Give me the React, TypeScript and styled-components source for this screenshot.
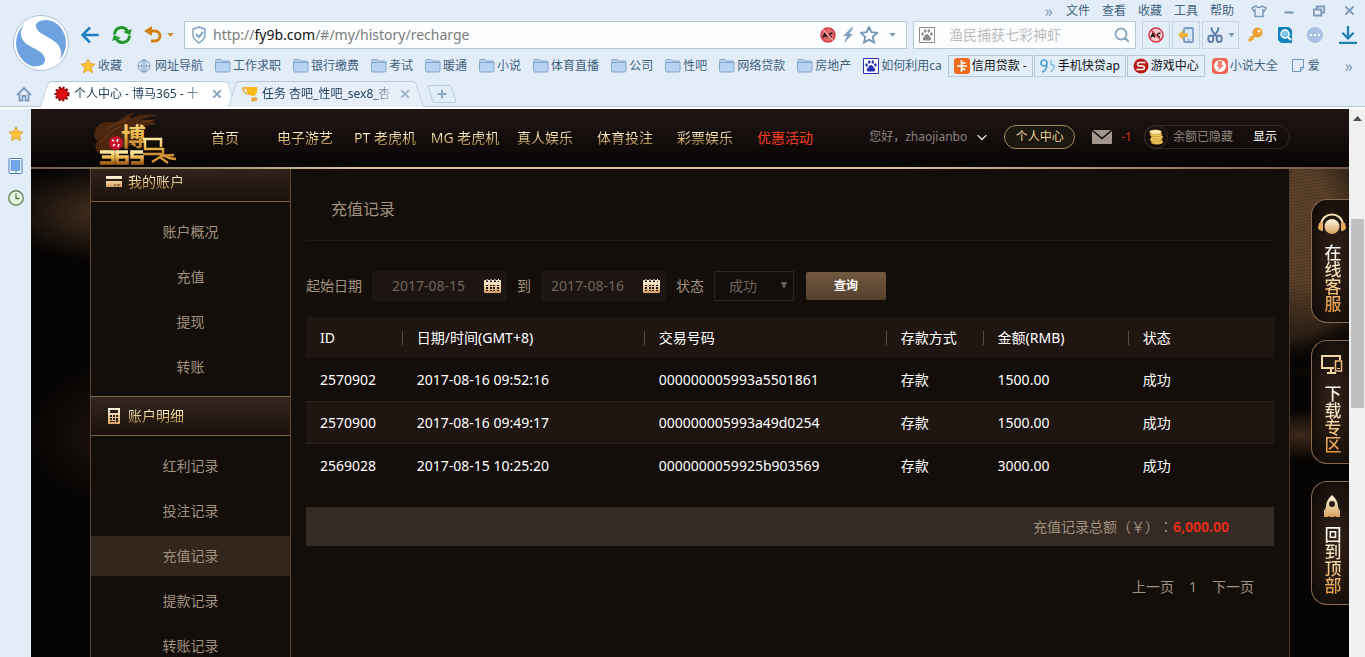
import React, { useState } from "react";
import styled, { createGlobalStyle, css } from "styled-components";

const GlobalStyle = createGlobalStyle`
  * { box-sizing: border-box; }
  body {
    margin: 0;
    background: #e3edf8;
    font-family: "Noto Sans", "Noto Sans CJK SC", sans-serif;
    font-size: 12px;
    line-height: 20px;
    overflow: hidden;
  }
  button, input, select {
    font: inherit;
    color: inherit;
    margin: 0;
    padding: 0;
    border: 0;
    border-radius: 0;
    background: none;
    outline: 0;
  }
  button { cursor: pointer; }
  a { color: inherit; text-decoration: none; }
  ul { list-style: none; margin: 0; padding: 0; }
  svg { display: block; flex: none; }
`;

const goldText = css`
  background: linear-gradient(#fff3cd 25%, #e2c681 55%, #9b7437 90%);
  background-clip: text;
  color: transparent;
`;

/* ---------- Browser frame ---------- */

const Frame = styled.div`
  display: flex;
  flex-direction: column;
  height: 100vh;
  overflow: hidden;
`;

const Chrome = styled.header`
  display: grid;
  grid-template-columns: 80px minmax(0, 1fr);
  color: #41617f;
`;

const LogoCell = styled.div`
  grid-row: span 3;
  padding: 14px 0 0 12px;
`;

const MenuRow = styled.nav`
  display: flex;
  justify-content: flex-end;
  align-items: center;
  gap: 12px;
  height: 21px;
`;

const WindowControls = styled.div`
  display: flex;
  margin: 0 1px 0 -2px;
`;

const WindowButton = styled.button`
  display: grid;
  place-items: center;
  width: 30px;
  height: 18px;
`;

const AddressRow = styled.div`
  display: flex;
  gap: 6px;
  height: 28px;
`;

const NavButtons = styled.div`
  display: flex;
  align-items: center;
  width: 98px;
`;

const NavButton = styled.button<{ $w: number }>`
  display: grid;
  place-items: center start;
  width: ${(p) => p.$w}px;
  height: 28px;
`;

const Field = styled.div`
  display: flex;
  align-items: center;
  background: #fbfdff;
  border: 1px solid #b4cadb;
  padding: 0 6px;
  gap: 6px;
`;

const UrlField = styled(Field)`
  flex: 1;
  min-width: 0;
`;

const SearchField = styled(Field)`
  width: 223px;
  padding: 0 5px;
`;

const UrlLink = styled.a`
  flex: 1;
  min-width: 0;
  overflow: hidden;
  white-space: nowrap;
  font-size: 14px;
  color: #7c7c7c;
  b { font-weight: 400; color: #111; }
`;

const SearchInput = styled.input`
  flex: 1;
  min-width: 0;
  padding-left: 8px;
  font-size: 14px;
  &::placeholder { color: #bcbcbc; opacity: 1; }
`;

const Tools = styled.div`
  display: flex;
  gap: 2px;
`;

const ToolButton = styled.button<{ $boxed?: boolean; $w?: number }>`
  display: flex;
  align-items: center;
  justify-content: center;
  gap: 5px;
  width: ${(p) => p.$w ?? 28}px;
  height: 28px;
  border: 1px solid ${(p) => (p.$boxed ? "#c6d5e4" : "transparent")};
`;

const BookmarkRow = styled.div`
  display: flex;
  align-items: center;
  height: 31px;
  padding: 2px 12px 0 0;
  white-space: nowrap;
`;

const Bookmark = styled.a<{ $boxed?: boolean }>`
  display: flex;
  align-items: center;
  height: 22px;
  margin-right: 12px;
  &:first-child { margin-right: ${(p) => (p.$boxed ? 1 : 15)}px; }
  ${(p) =>
    p.$boxed &&
    css`
      margin-right: 1px;
      padding: 0 5px;
      border: 1px solid #b4c8da;
      color: #111;
    `}
`;

const BookmarkGroup = styled.div`
  display: flex;
  margin: 0 6px 0 -6px;
`;

const IconSlot = styled.span`
  display: flex;
  width: 18px;
`;

const Overflow = styled.button`
  margin-left: auto;
  font-size: 16px;
  color: #7d9bb8;
`;

const MenuOverflow = styled(Overflow)`
  margin: 0 1px 0 0;
`;

const TabRow = styled.div`
  display: flex;
  align-items: flex-end;
  height: 29px;
  border-bottom: 2px solid #fff;
  box-shadow: inset 0 -1px #b4cadb;
  color: #24415f;
`;

const HomeButton = styled.button`
  display: grid;
  place-items: center;
  width: 44px;
  height: 26px;
  padding-left: 4px;
`;

const Tab = styled.div<{ $active?: boolean }>`
  position: relative;
  display: flex;
  align-items: center;
  gap: 4px;
  width: 188px;
  height: 26px;
  padding: 0 10px;
  isolation: isolate;
  &::before, &::after {
    content: "";
    position: absolute;
    z-index: -1;
    top: 0;
    bottom: 0;
    border-top: 1px solid #b4cadb;
    background: ${(p) => (p.$active ? "#fff" : "#e7f0f9")};
  }
  &::before {
    left: 0;
    right: 50%;
    border-left: 1px solid #b4cadb;
    border-top-left-radius: 4px;
    transform: skewX(-18deg);
  }
  &::after {
    left: 45%;
    right: 0;
    border-right: 1px solid #b4cadb;
    border-top-right-radius: 4px;
    transform: skewX(18deg);
  }
`;

const TabTitle = styled.span`
  flex: 1;
  min-width: 0;
  overflow: hidden;
  white-space: nowrap;
  mask-image: linear-gradient(to right, #000 82%, transparent);
`;

const NewTab = styled.button`
  display: grid;
  place-items: center;
  width: 24px;
  height: 18px;
  margin: 0 0 4px 10px;
  border: 1px solid #b9cddf;
  border-radius: 2px;
  transform: skewX(18deg);
  svg { transform: skewX(-18deg); }
`;

const Viewport = styled.div`
  display: flex;
  flex: 1;
  min-height: 0;
`;

const SideStrip = styled.aside`
  display: flex;
  flex-direction: column;
  align-items: center;
  gap: 16px;
  width: 31px;
  padding: 17px 0 0;
`;

const Scrollbar = styled.div`
  display: flex;
  flex-direction: column;
  align-items: center;
  width: 16px;
  padding-top: 7px;
  background: #f0f0f0;
`;

const ScrollThumb = styled.div`
  flex: none;
  width: 13px;
  height: 35%;
  margin-top: 98px;
  background: #bfbfbf;
`;

/* ---------- Site ---------- */

const Site = styled.div`
  position: relative;
  flex: 1;
  min-width: 0;
  overflow: hidden;
  background:
    repeating-linear-gradient(172deg, rgba(0, 0, 0, 0.14) 0 1px, transparent 1px 3px),
    linear-gradient(160deg, transparent 58%, #060403 80%) 100% 160px / 60px 100px no-repeat,
    radial-gradient(ellipse 110px 48px at 76px 104px, #4a3322, transparent),
    radial-gradient(ellipse 90px 70px at 90px 325px, #24170f, transparent),
    radial-gradient(ellipse 90px 150px at calc(100% - 46px) 120px, #5c412a 35%, transparent),
    radial-gradient(ellipse 50px 26px at calc(100% - 48px) 326px, #422b1b, transparent),
    #060403;
`;

const SiteHeader = styled.header`
  position: relative;
  z-index: 1;
  height: 60px;
  background:
    linear-gradient(to right, #6e5a48, #d8c495 25%, #d8c495 65%, #6f5645) bottom / 100% 2px no-repeat,
    linear-gradient(#1f1614, #080404);
`;

const Container = styled.div`
  display: flex;
  max-width: 1200px;
  margin: 0 auto;
`;

const HeaderInner = styled(Container)`
  align-items: center;
  height: 58px;
`;

const SiteLogo = styled.a`
  width: 95px;
  padding-left: 2px;
`;

const MainNav = styled.nav`
  display: flex;
`;

const NavItem = styled.a<{ $hot?: boolean }>`
  width: 80px;
  text-align: center;
  font-size: 14px;
  white-space: nowrap;
  ${(p) => (p.$hot ? "color: #f23c22;" : goldText)}
`;

const UserArea = styled.div`
  display: flex;
  align-items: center;
  margin-left: auto;
  padding-bottom: 3px;
  color: #8f8680;
  white-space: nowrap;
`;

const UserMenu = styled.button`
  display: flex;
  align-items: center;
  gap: 10px;
  margin-right: 17px;
`;

const CenterPill = styled.a`
  width: 71px;
  height: 24px;
  margin-right: 17px;
  border: 1px solid #a58b52;
  border-radius: 12px;
  background: #1c1710;
  text-align: center;
  line-height: 22px;
  color: #ead596;
`;

const MailLink = styled.a`
  display: flex;
  align-items: center;
  gap: 9px;
  margin-right: 12px;
  color: #d02c20;
`;

const Balance = styled.div`
  display: flex;
  align-items: center;
  height: 24px;
  padding-right: 12px;
  border: 1px solid #342b27;
  border-radius: 12px;
  button { margin-left: 20px; color: #fff; }
`;

const CoinBadge = styled.span`
  display: grid;
  place-items: center;
  width: 24px;
  height: 24px;
  margin: 0 5px 0 -1px;
  border: 1px solid #3a2f28;
  border-radius: 50%;
`;

const Content = styled(Container)`
  margin-top: -7px;
`;

const Sidebar = styled.aside`
  width: 201px;
  height: 100vh;
  border: 1px solid #5f4634;
  border-width: 0 1px;
  background: #130e0a;
  font-size: 14px;
`;

const GroupTitle = styled.h2`
  display: flex;
  align-items: center;
  gap: 6px;
  height: 40px;
  margin: 0;
  padding-left: 15px;
  border: 1px solid #7d6248;
  border-width: 1px 0;
  background: linear-gradient(#33261e, #1c120b);
  font-size: 14px;
  font-weight: 400;
`;

const GroupName = styled.span`
  ${goldText}
`;

const GroupIcon = styled.span`
  display: grid;
  justify-items: center;
  min-width: 16px;
`;

const GroupList = styled.ul`
  padding: 10px 0 4px;
`;

const GroupItem = styled.li<{ $active?: boolean }>`
  margin-bottom: 5px;
  text-align: center;
  line-height: 40px;
  color: #a1917f;
  background: ${(p) => (p.$active ? "#33261c" : "none")};
  a { display: block; }
`;

const Main = styled.main`
  flex: 1;
  min-width: 0;
  padding: 7px 15px 0;
  border-right: 1px solid #4b3829;
  background: #130e0a;
  font-size: 14px;
  color: #a1917f;
`;

const PageTitle = styled.h1`
  margin: 0;
  padding: 30px 25px 20px;
  border-bottom: 1px solid #221a16;
  font-size: 16px;
  line-height: 21px;
  font-weight: 400;
`;

const Filters = styled.form`
  display: flex;
  align-items: center;
  gap: 10px;
  height: 30px;
  margin: 30px 0 16px;
`;

const DateBox = styled.span<{ $w: number; $pad: number }>`
  display: flex;
  align-items: center;
  width: ${(p) => p.$w}px;
  height: 30px;
  padding: 0 6px 0 ${(p) => p.$pad}px;
  background: #1d1511;
  input { flex: 1; min-width: 0; color: #6f645b; }
`;

const SelectBox = styled.span`
  position: relative;
  width: 80px;
  height: 30px;
  select {
    appearance: none;
    width: 100%;
    height: 100%;
    padding-left: 14px;
    border: 1px solid #2d2521;
    background: #130e0a;
    color: #6f645b;
  }
  svg { position: absolute; right: 7px; top: 11px; }
`;

const QueryButton = styled.button`
  width: 80px;
  height: 28px;
  margin-left: 2px;
  border-radius: 2px;
  background: linear-gradient(#72583f, #55402c);
  color: #fff;
  font-size: 12px;
  font-weight: 700;
`;

const Records = styled.table`
  width: 100%;
  table-layout: fixed;
  border-collapse: collapse;
  color: #fff;
  th, td {
    padding: 0 14px;
    text-align: left;
    font-weight: 400;
    white-space: nowrap;
  }
  th {
    height: 41px;
    background:
      linear-gradient(#5f4b3a, #5f4b3a) 100% 50% / 1px 14px no-repeat,
      #1f1612;
  }
  th:last-child { background: #1f1612; }
  td { height: 43px; }
  tbody tr:nth-child(even) {
    background: #1f1612;
    box-shadow: inset 0 1px #2b201a, inset 0 -1px #2b201a;
  }
`;

const Column = styled.col<{ $share: number }>`
  width: ${(p) => p.$share}%;
`;

const Total = styled.p`
  margin: 20px 0 0;
  padding-right: 45px;
  background: #352b24;
  text-align: right;
  line-height: 38px;
  b { color: #e02b1a; }
`;

const Currency = styled.span`
  font-family: "Noto Sans CJK TC", sans-serif;
  text-spacing-trim: space-all;
`;

const Pager = styled.nav`
  display: flex;
  justify-content: flex-end;
  gap: 15px;
  padding: 31px 20px 0;
`;

const FloatDock = styled.div`
  position: absolute;
  top: 90px;
  right: 0;
  z-index: 2;
  display: flex;
  flex-direction: column;
  gap: 17px;
`;

const DockLink = styled.a`
  display: flex;
  flex-direction: column;
  align-items: center;
  gap: 8px;
  width: 38px;
  height: 124px;
  padding: 12px 0 0 2px;
  border: 1px solid #8a6a4c;
  border-right: 0;
  border-radius: 16px 0 0 16px;
  background: radial-gradient(ellipse at 60% 50%, #36241a, #120c08 85%);
`;

const DockIcon = styled.span`
  display: grid;
  place-items: center;
  height: 24px;
`;

const DockLabel = styled.span`
  writing-mode: vertical-rl;
  font-size: 17px;
  font-weight: 500;
  line-height: 20px;
  background: linear-gradient(#fff 5%, #f3dcae 50%, #e69b42 95%);
  background-clip: text;
  color: transparent;
`;

/* ---------- Drawings ---------- */

const SogouLogo = () => (
  <svg width="58" height="58" viewBox="0 0 58 58">
    <circle cx="29" cy="29" r="27.5" fill="#fff" stroke="#a9c2da" />
    <circle cx="29" cy="29" r="25" fill="#6ea2e0" />
    <path d="M32 3C17 3 8 11 9 21c1 13 24 13 24 25 0 5-6 7-12 6 4 3 9 4 14 3 10-2 15-9 14-18C47 24 26 22 24 13c-1-4 3-7 10-7 3 0 6 1 8 2-3-3-6-5-10-5z" fill="#fff" />
  </svg>
);

const Stroke = ({ d, color = "#7d9bb8", size = 16, w = 2 }: { d: string; color?: string; size?: number; w?: number }) => (
  <svg width={size} height={size} viewBox="0 0 16 16" fill="none" stroke={color} strokeWidth={w}>
    <path d={d} />
  </svg>
);

const Caret = ({ color = "#7d9bb8" }: { color?: string }) => (
  <svg width="7" height="4" viewBox="0 0 8 5"><path d="M0 0h8L4 5z" fill={color} /></svg>
);

const BackIcon = () => <Stroke size={20} color="#1f7fc4" w={2} d="M8 2L2 8l6 6M2.500 8H15" />;

const RefreshIcon = () => (
  <svg width="22" height="20" viewBox="0 0 22 20">
    <path d="M3.500 9.500C4 2 13 0 16.500 6M18.500 10.500C18 18 9 20 5.500 14" fill="none" stroke="#23992b" strokeWidth="3" />
    <path d="M21 4l-2 6-7-3zM1 16l2-6 7 3z" fill="#23992b" />
  </svg>
);

const UndoIcon = () => (
  <svg width="18" height="18" viewBox="0 0 18 18">
    <path d="M4 5h7a4.500 4.500 0 0 1 0 10H7" fill="none" stroke="#d2800f" strokeWidth="3" />
    <path d="M8 0v10L0 5z" fill="#d2800f" />
  </svg>
);

const ShieldIcon = () => (
  <svg width="16" height="18" viewBox="0 0 16 18" fill="none" stroke="#7f9fc0" strokeWidth="1.500">
    <path d="M8 1l6 2v6c0 4-3 6-6 8-3-2-6-4-6-8V3z" />
    <path d="M5 8l3 3 4-5" strokeWidth="2" />
  </svg>
);

const BlockIcon = ({ light }: { light?: boolean }) => (
  <svg width="16" height="16" viewBox="0 0 16 16">
    <circle cx="8" cy="8" r="7" fill={light ? "#f3ccd2" : "#df6a6c"} stroke="#d33b44" strokeWidth="1.500" />
    <path d="M3 10.500l2-4.500 2 4.500M4 9h2M12.500 6.500c-3-1.500-4.500 3.500-.500 3.500" fill="none" stroke="#2a1515" strokeWidth="1.500" />
    <path d="M3 3l10 10" stroke={light ? "#d33b44" : "#f3b0ae"} strokeWidth="1.200" />
  </svg>
);

const BoltIcon = () => (
  <svg width="12" height="16" viewBox="0 0 12 16"><path d="M10 0L1 9h4l-3 7 9-9H7.500L11 1z" fill="#82a3c0" /></svg>
);

const STAR = "M8 0l2.400 5.200 5.600.700-4.200 3.900 1.200 5.700L8 12.600l-5 2.900 1.200-5.700L0 5.900l5.600-.700z";

const StarIcon = ({ outline, size = 16 }: { outline?: boolean; size?: number }) => (
  <svg width={size} height={size} viewBox="-1 -1 18 18">
    <path d={STAR} fill={outline ? "none" : "#fdc535"} stroke={outline ? "#7396b8" : "#dc9c3c"} strokeWidth={outline ? 1.8 : 1} />
  </svg>
);

const PawIcon = ({ color }: { color: string }) => (
  <svg width="16" height="16" viewBox="0 0 16 16">
    <path d="M.500.500h15v15H.500z" fill="#fff" stroke={color} />
    <g fill={color}>
      <ellipse cx="3.600" cy="7" rx="1.300" ry="1.800" />
      <ellipse cx="6.200" cy="4" rx="1.300" ry="1.800" />
      <ellipse cx="9.800" cy="4" rx="1.300" ry="1.800" />
      <ellipse cx="12.400" cy="7" rx="1.300" ry="1.800" />
      <path d="M8 7c2 0 2 2 3.500 3.300C13 12 12 13.800 10 13.600c-1.500-.300-2.500-.300-4 0-2 .200-3-1.600-1.500-3.300C6 9 6 7 8 7z" />
    </g>
  </svg>
);

const SearchIcon = () => <Stroke color="#8aa5bf" d="M12.500 7A5.500 5.500 0 1 1 1.500 7a5.500 5.500 0 0 1 11 0zM11 11L15 15" w={1.8} />;

const PhoneIcon = () => (
  <svg width="16" height="16" viewBox="0 0 16 16">
    <rect x="6" y="1" width="9" height="14" rx="1" fill="#d6e6f8" stroke="#7f9dc4" strokeWidth="1.800" />
    <path d="M9 13h3" stroke="#7f9dc4" />
    <path d="M5 3v3h5v4H5v3L0 8z" fill="#f3b13c" />
  </svg>
);

const ScissorsIcon = () => (
  <svg width="16" height="16" viewBox="0 0 16 16" fill="none" stroke="#5f7fa8" strokeWidth="2">
    <path d="M4.500 0.500c0 4 2 6 5.500 9M11.500 0.500c0 4-2 6-5.500 9" />
    <ellipse cx="3.800" cy="11.800" rx="2.500" ry="3.200" />
    <ellipse cx="12.200" cy="11.800" rx="2.500" ry="3.200" />
  </svg>
);

const KeyIcon = () => (
  <svg width="16" height="16" viewBox="0 0 16 16">
    <path d="M8 8l-6 6" stroke="#f0a030" strokeWidth="3" />
    <path d="M3 10l3 3" stroke="#f0a030" strokeWidth="2" />
    <circle cx="10.500" cy="5.500" r="5" fill="#f0a030" />
    <circle cx="12" cy="4" r="1.500" fill="#fff0d0" />
  </svg>
);

const FindIcon = () => (
  <svg width="16" height="16" viewBox="0 0 16 16">
    <path d="M1 0h11l3 3v13H4l-3-3z" fill="#1583bd" />
    <circle cx="8" cy="7" r="4" fill="#7cc4e8" stroke="#fff" strokeWidth="1.500" />
    <path d="M11 10l3 3" stroke="#fff" strokeWidth="2" />
  </svg>
);

const DotsIcon = () => (
  <svg width="16" height="16" viewBox="0 0 16 16">
    <circle cx="8" cy="8" r="8" fill="#a9c1e4" />
    <path d="M3 7h2v2H3zM7 7h2v2H7zM11 7h2v2h-2z" fill="#fff" />
  </svg>
);

const DownloadIcon = () => <Stroke color="#1f7fae" size={18} d="M8 0v11M3 6l5 5 5-5M0 15h16" />;

const FolderIcon = () => (
  <svg width="16" height="14" viewBox="0 0 16 14">
    <path d="M.500 2.500c0-1 .500-2 1.500-2h4l1.500 1.500H13.500q1.500 0 1.500 1.500v8q0 1.500-1.500 1.500H2q-1.500 0-1.500-1.500z" fill="#b9d4f2" stroke="#83a4c9" />
    <path d="M1 3.500h14" stroke="#83a4c9" />
  </svg>
);

const GlobeIcon = () => (
  <svg width="14" height="14" viewBox="0 0 14 14" fill="none" stroke="#7f9dbd">
    <circle cx="7" cy="7" r="6" /><ellipse cx="7" cy="7" rx="2.500" ry="6" /><path d="M1 7h12M7 1v12" />
  </svg>
);

const CardSiteIcon = () => (
  <svg width="16" height="16" viewBox="0 0 16 16">
    <rect width="16" height="16" rx="3" fill="#f06a1c" />
    <path d="M7.500 2v6M7.500 5h4M3 8h10M7.500 8v6M8 10l3 2" stroke="#fff" strokeWidth="1.600" fill="none" />
  </svg>
);

const NineIcon = () => (
  <svg width="16" height="16" viewBox="0 0 16 16" fill="none" stroke="#4fa3d8" strokeWidth="1.600">
    <path d="M7 5a3 3 0 1 0-6 0 3 3 0 0 0 6 0c0 5-1 8-5 9" /><path d="M11 2v5h3v3l-3 4" strokeWidth="1" />
  </svg>
);

const GameIcon = () => (
  <svg width="16" height="16" viewBox="0 0 16 16">
    <circle cx="8" cy="8" r="7.500" fill="#b81a17" />
    <path d="M12.500 4.500H7C3.500 4.500 4 8 6.500 8h3c2.500 0 2.500 3.500 0 3.500H3.500" fill="none" stroke="#fff" strokeWidth="1.400" />
  </svg>
);

const NovelIcon = () => (
  <svg width="16" height="16" viewBox="0 0 16 16">
    <rect width="16" height="16" rx="4" fill="#ef6552" /><circle cx="8" cy="8" r="6" fill="#fff" />
    <path d="M6 3h4v4h2l-6 6 1-4H5z" fill="#f08475" />
  </svg>
);

const NoteIcon = () => <Stroke w={1} color="#6f93bd" d="M2.500 1.500h11v8l-3 4h-8zM10.500 13.500v-4h3" />;

const HomeIcon = () => <Stroke d="M1 9l7-7 7 7M3.500 8v6.500H6.500V10h3v4.500h3V8" w={1.8} />;

const SealIcon = () => (
  <svg width="16" height="16" viewBox="0 0 16 16">
    <circle cx="8" cy="8" r="6" fill="#c80c0c" stroke="#800" strokeWidth="3" strokeDasharray="2 1.500" />
    <circle cx="8" cy="8" r="5" fill="#e01010" />
  </svg>
);

const TrophyIcon = () => (
  <svg width="16" height="16" viewBox="0 0 16 16">
    <path d="M4 1h11c1 5-1 9-4 9C7 10 4 6 4 1z" fill="#fdb913" />
    <path d="M4 2H1c0 4 3 6 6 6" fill="none" stroke="#eaa41c" strokeWidth="1.500" />
    <path d="M9 12l5-1 2 3-6 2z" fill="#e9a53a" />
  </svg>
);

const TabletIcon = () => (
  <svg width="16" height="16" viewBox="0 0 16 16">
    <rect x="1" y="0.500" width="13" height="15" rx="1" fill="#fff" stroke="#3f7cc4" />
    <path d="M3 2.500h9v10H3z" fill="#70a7ec" stroke="#3f7cc4" strokeWidth=".500" /><path d="M7 14h2" stroke="#3f7cc4" />
  </svg>
);

const ClockIcon = () => (
  <svg width="16" height="16" viewBox="0 0 16 16">
    <circle cx="8" cy="8" r="7.200" fill="#eaf6e2" stroke="#63865c" strokeWidth="1.400" />
    <path d="M8 3.500V8.500h3.500" fill="none" stroke="#54764e" strokeWidth="1.300" />
  </svg>
);

const BrandLogo = () => (
  <svg width="86" height="56" viewBox="0 0 86 56">
    <defs>
      <linearGradient id="brandGold" x1="0" y1="0" x2="0" y2="1">
        <stop offset="0" stopColor="#ffe9a0" /><stop offset=".5" stopColor="#e9b649" /><stop offset="1" stopColor="#a8651a" />
      </linearGradient>
    </defs>
    <path d="M3 22C3 13 14 11 24 12c7-3 11-9 19-9-3 2-5 4-6 6 9-4 18-6 29-3-9 0-14 2-17 4 7-1 12 1 15 4l-15 3-4 17-38 9c-4-3-5-9-1-12-4-3-5-6-3-9z" fill="#4c260e" />
    <path d="M14 20c8-7 17-8 24-12M8 32c7-4 10-13 21-15M50 12l12-2" stroke="#753f18" fill="none" />
    <text x="29" y="36" fontSize="25" fontWeight="700" fill="url(#brandGold)" fontFamily="Noto Sans CJK SC, sans-serif">博</text>
    <path d="M51 29h18v8M53 29v10h18v8" fill="none" stroke="url(#brandGold)" strokeWidth="2.500" />
    <path d="M51 44h18l8 4 7 1M60 52l8-5 8 6M68 46l14-1" fill="none" stroke="#d29336" strokeWidth="2.500" />
    <g fill="none" stroke="url(#brandGold)" strokeWidth="3.600">
      <path d="M8 42h13v11H8M10 47h11" />
      <path d="M36 42H25v11h10v-6H25" />
      <path d="M51 42H40v5h10v6H39" />
    </g>
    <circle cx="24" cy="33" r="7" fill="#c5122c" />
    <path d="M20 30l2 1M26 29l-1 3M21 36l2-2M27 34l-1 3" stroke="#fff" strokeWidth="1.500" />
  </svg>
);

const MailIcon = () => (
  <svg width="20" height="14" viewBox="0 0 20 14">
    <path d="M1 0h18l-9 7.500zM0 1l10 8.500L20 1v12q0 1-1 1H1q-1 0-1-1z" fill="#a3968e" />
  </svg>
);

const CoinsIcon = () => (
  <svg width="16" height="16" viewBox="0 0 16 16" fill="#f0c65a" stroke="#a87a2a" strokeWidth=".500">
    <ellipse cx="9" cy="13" rx="6" ry="2.300" /><ellipse cx="8" cy="10.500" rx="6" ry="2.300" />
    <ellipse cx="9" cy="8" rx="6" ry="2.300" /><ellipse cx="8" cy="5.500" rx="6" ry="2.300" />
    <ellipse cx="7.500" cy="3" rx="6" ry="2.300" fill="#fff0b0" />
  </svg>
);

const Gradient = ({ id }: { id: string }) => (
  <defs>
    <linearGradient id={id} x1="0" y1="0" x2="0" y2="1">
      <stop offset="0" stopColor="#fff6df" /><stop offset="1" stopColor="#d8a25c" />
    </linearGradient>
  </defs>
);

const CardIcon = () => (
  <svg width="16" height="12" viewBox="0 0 16 12">
    <Gradient id="cardGold" />
    <path d="M0 0h16v3H0zM0 5h16v6H0z" fill="url(#cardGold)" /><path d="M8 9h2M11 9h3" stroke="#4b3320" />
  </svg>
);

const CalculatorIcon = () => (
  <svg width="12" height="16" viewBox="0 0 12 16">
    <Gradient id="calcGold" />
    <path d="M0 0h12v16H0zM2 2v3h8V2zM2 7v2h2V7zM5 7v2h2V7zM8 7v2h2V7zM2 10v2h2v-2zM5 10v2h2v-2zM8 10v4h2v-4zM2 13v1h5v-1z" fill="url(#calcGold)" fillRule="evenodd" />
  </svg>
);

const CalendarIcon = () => (
  <svg width="17" height="16" viewBox="0 0 17 16">
    <Gradient id="calendarGold" />
    <path d="M1 2h1v2h2V2h2v2h2V2h2v2h2V2h2v2h1V2h1q1 0 1 1v11q0 1-1 1H1q-1 0-1-1V3q0-1 1-1zM2 7v1h2V7zM6 7v1h2V7zM9 7v1h2V7zM13 7v1h2V7zM2 9v2h2V9zM6 9v2h2V9zM9 9v2h2V9zM13 9v2h2V9zM2 12v1h2v-1zM6 12v1h2v-1zM9 12v1h2v-1zM13 12v1h2v-1z" fill="url(#calendarGold)" fillRule="evenodd" />
    <path d="M3 1v2M7 1v2M11 1v2M14.500 1v2" stroke="#fff0cf" />
  </svg>
);

const HeadsetIcon = () => (
  <svg width="28" height="24" viewBox="0 0 28 24">
    <Gradient id="headGold" />
    <circle cx="14" cy="14.500" r="7.500" fill="url(#headGold)" />
    <path d="M3 13C4 -1 24 -1 25 13" fill="none" stroke="#f5deb2" strokeWidth="2" />
    <path d="M1 11q3-1 4 0v8q-4 0-5-3zM27 11q-3-1-4 0v8q4 0 5-3z" fill="#e3aa60" />
  </svg>
);

const DevicesIcon = () => (
  <svg width="22" height="20" viewBox="0 0 22 20">
    <path d="M13 13H1V1h18v4M6 18h9M10 14v4" fill="none" stroke="#f2d5a5" strokeWidth="2" />
    <rect x="14.500" y="6" width="6" height="10" fill="#1c120c" stroke="#eec080" strokeWidth="1.500" />
    <path d="M16 13.500h3" stroke="#eec080" />
  </svg>
);

const RocketIcon = () => (
  <svg width="18" height="23" viewBox="0 0 18 23">
    <Gradient id="rocketGold" />
    <path d="M9 0c4 4 6 7 6 12l2 4v6h-4l-1-1-1 1H7l-1-1-1 1H1v-6l2-4C3 7 5 4 9 0zM9 6a3 3 0 1 0 0 6 3 3 0 0 0 0-6z" fill="url(#rocketGold)" fillRule="evenodd" />
  </svg>
);

/* ---------- Data ---------- */

const menus = ["文件", "查看", "收藏", "工具", "帮助"];
const folders = ["工作求职", "银行缴费", "考试", "暖通", "小说", "体育直播", "公司", "性吧", "网络贷款", "房地产"];
const siteNav = ["首页", "电子游艺", "PT 老虎机", "MG 老虎机", "真人娱乐", "体育投注", "彩票娱乐", "优惠活动"];
const accountItems = ["账户概况", "充值", "提现", "转账"];
const detailItems = ["红利记录", "投注记录", "充值记录", "提款记录", "转账记录"];
const columns: [string, number][] = [
  ["ID", 10], ["日期/时间(GMT+8)", 25], ["交易号码", 25], ["存款方式", 10], ["金额(RMB)", 15], ["状态", 15],
];
const records = [
  ["2570902", "2017-08-16 09:52:16", "000000005993a5501861", "存款", "1500.00", "成功"],
  ["2570900", "2017-08-16 09:49:17", "000000005993a49d0254", "存款", "1500.00", "成功"],
  ["2569028", "2017-08-15 10:25:20", "0000000059925b903569", "存款", "3000.00", "成功"],
];

function BrowserChrome() {
  return (
    <>
      <Chrome>
        <LogoCell><SogouLogo /></LogoCell>
        <MenuRow>
          <MenuOverflow>»</MenuOverflow>
          {menus.map((m) => <button key={m}>{m}</button>)}
          <WindowControls>
            <WindowButton aria-label="皮肤"><Stroke w={1.5} d="M5 3L1 5l1.500 3L4 7v6.500h8V7l1.500 1L15 5l-4-2c-1 2-5 2-6 0z" /></WindowButton>
            <WindowButton aria-label="最小化"><Stroke size={12} d="M2 10h12" w={3} /></WindowButton>
            <WindowButton aria-label="还原"><Stroke size={12} d="M5 5V2h10v8h-3M1 6h10v8H1z" w={2.5} /></WindowButton>
            <WindowButton aria-label="关闭"><Stroke size={11} d="M2 2l12 12M14 2L2 14" w={3} /></WindowButton>
          </WindowControls>
        </MenuRow>
        <AddressRow>
          <NavButtons>
            <NavButton $w={31} aria-label="后退"><BackIcon /></NavButton>
            <NavButton $w={33} aria-label="刷新"><RefreshIcon /></NavButton>
            <NavButton $w={23} aria-label="恢复"><UndoIcon /></NavButton>
            <Caret color="#d2903c" />
          </NavButtons>
          <UrlField>
            <ShieldIcon />
            <UrlLink href="#/my/history/recharge">http://<b>fy9b.com</b>/#/my/history/recharge</UrlLink>
            <BlockIcon /><BoltIcon /><StarIcon outline size={18} />
            <ToolButton $w={16} aria-label="历史"><Caret /></ToolButton>
          </UrlField>
          <SearchField>
            <PawIcon color="#8a8a8a" />
            <SearchInput aria-label="搜索" placeholder="渔民捕获七彩神虾" />
            <SearchIcon />
          </SearchField>
          <Tools>
            <ToolButton $boxed aria-label="拦截"><BlockIcon light /></ToolButton>
            <ToolButton $boxed aria-label="手机"><PhoneIcon /></ToolButton>
            <ToolButton $boxed $w={37} aria-label="截图"><ScissorsIcon /><Caret /></ToolButton>
            <ToolButton aria-label="密码"><KeyIcon /></ToolButton>
            <ToolButton aria-label="查找"><FindIcon /></ToolButton>
            <ToolButton aria-label="更多"><DotsIcon /></ToolButton>
            <ToolButton $w={34} aria-label="下载"><DownloadIcon /></ToolButton>
          </Tools>
        </AddressRow>
        <BookmarkRow>
          <Bookmark href="#fav"><IconSlot><StarIcon /></IconSlot>收藏</Bookmark>
          <Bookmark href="#nav"><IconSlot><GlobeIcon /></IconSlot>网址导航</Bookmark>
          {folders.map((f) => (
            <Bookmark key={f} href="#folder"><IconSlot><FolderIcon /></IconSlot>{f}</Bookmark>
          ))}
          <Bookmark href="#baidu"><IconSlot><PawIcon color="#2a32b8" /></IconSlot>如何利用ca</Bookmark>
          <BookmarkGroup>
            <Bookmark $boxed href="#loan"><IconSlot><CardSiteIcon /></IconSlot>信用贷款 -</Bookmark>
            <Bookmark $boxed href="#app"><IconSlot><NineIcon /></IconSlot>手机快贷ap</Bookmark>
            <Bookmark $boxed href="#game"><IconSlot><GameIcon /></IconSlot>游戏中心</Bookmark>
          </BookmarkGroup>
          <Bookmark href="#novel"><IconSlot><NovelIcon /></IconSlot>小说大全</Bookmark>
          <Bookmark href="#love"><IconSlot><NoteIcon /></IconSlot>爱</Bookmark>
          <Overflow>»</Overflow>
        </BookmarkRow>
      </Chrome>
      <TabRow>
        <HomeButton aria-label="主页"><HomeIcon /></HomeButton>
        <Tab $active>
          <SealIcon /><TabTitle>个人中心 - 博马365 - 十</TabTitle>
          <button aria-label="关闭标签"><Stroke size={10} color="#8ba6c1" w={3} d="M2 2l12 12M14 2L2 14" /></button>
        </Tab>
        <Tab>
          <TrophyIcon /><TabTitle>任务 杏吧_性吧_sex8_杏</TabTitle>
          <button aria-label="关闭标签"><Stroke size={10} color="#9db5cc" w={3} d="M2 2l12 12M14 2L2 14" /></button>
        </Tab>
        <NewTab aria-label="新标签"><Stroke size={10} w={3} color="#8ba6c1" d="M8 1v14M1 8h14" /></NewTab>
      </TabRow>
    </>
  );
}

function HistoryPage() {
  const [from, setFrom] = useState("2017-08-15");
  const [to, setTo] = useState("2017-08-16");
  return (
    <Main>
      <PageTitle>充值记录</PageTitle>
      <Filters onSubmit={(e) => e.preventDefault()}>
        <label htmlFor="from">起始日期</label>
        <DateBox $w={135} $pad={20}>
          <input id="from" value={from} onChange={(e) => setFrom(e.target.value)} /><CalendarIcon />
        </DateBox>
        <label htmlFor="to">到</label>
        <DateBox $w={125} $pad={10}>
          <input id="to" value={to} onChange={(e) => setTo(e.target.value)} /><CalendarIcon />
        </DateBox>
        <label htmlFor="state">状态</label>
        <SelectBox>
          <select id="state"><option>成功</option></select>
          <svg width="6" height="7" viewBox="0 0 6 7"><path d="M0 0h6L3 7z" fill="#6f645b" /></svg>
        </SelectBox>
        <QueryButton>查询</QueryButton>
      </Filters>
      <Records>
        <colgroup>{columns.map(([name, share]) => <Column key={name} $share={share} />)}</colgroup>
        <thead><tr>{columns.map(([name]) => <th key={name} scope="col">{name}</th>)}</tr></thead>
        <tbody>
          {records.map((row) => (
            <tr key={row[0]}>{row.map((cell, i) => <td key={i}>{cell}</td>)}</tr>
          ))}
        </tbody>
      </Records>
      <Total>充值记录总额<Currency>（￥）：</Currency><b>6,000.00</b></Total>
      <Pager aria-label="分页">
        <a href="#prev">上一页</a><span>1</span><a href="#next">下一页</a>
      </Pager>
    </Main>
  );
}

export default function App() {
  return (
    <Frame>
      <GlobalStyle />
      <BrowserChrome />
      <Viewport>
        <SideStrip><StarIcon /><TabletIcon /><ClockIcon /></SideStrip>
        <Site>
          <SiteHeader>
            <HeaderInner>
              <SiteLogo href="#home" aria-label="博马365"><BrandLogo /></SiteLogo>
              <MainNav>
                {siteNav.map((n) => <NavItem key={n} href="#nav" $hot={n === "优惠活动"}>{n}</NavItem>)}
              </MainNav>
              <UserArea>
                <UserMenu>您好，zhaojianbo<Stroke size={10} color="#eee" d="M1 5l7 7 7-7" /></UserMenu>
                <CenterPill href="#my">个人中心</CenterPill>
                <MailLink href="#mail"><MailIcon />-1</MailLink>
                <Balance>
                  <CoinBadge><CoinsIcon /></CoinBadge>余额已隐藏<button>显示</button>
                </Balance>
              </UserArea>
            </HeaderInner>
          </SiteHeader>
          <Content>
            <Sidebar>
              <GroupTitle><GroupIcon><CardIcon /></GroupIcon><GroupName>我的账户</GroupName></GroupTitle>
              <GroupList>
                {accountItems.map((t) => <GroupItem key={t}><a href="#item">{t}</a></GroupItem>)}
              </GroupList>
              <GroupTitle><GroupIcon><CalculatorIcon /></GroupIcon><GroupName>账户明细</GroupName></GroupTitle>
              <GroupList>
                {detailItems.map((t) => <GroupItem key={t} $active={t === "充值记录"}><a href="#item">{t}</a></GroupItem>)}
              </GroupList>
            </Sidebar>
            <HistoryPage />
          </Content>
          <FloatDock>
            <DockLink href="#service"><DockIcon><HeadsetIcon /></DockIcon><DockLabel>在线客服</DockLabel></DockLink>
            <DockLink href="#download"><DockIcon><DevicesIcon /></DockIcon><DockLabel>下载专区</DockLabel></DockLink>
            <DockLink href="#top"><DockIcon><RocketIcon /></DockIcon><DockLabel>回到顶部</DockLabel></DockLink>
          </FloatDock>
        </Site>
        <Scrollbar>
          <svg width="9" height="5" viewBox="0 0 9 5"><path d="M0 5h9L4.500 0z" fill="#505050" /></svg>
          <ScrollThumb />
        </Scrollbar>
      </Viewport>
    </Frame>
  );
}
